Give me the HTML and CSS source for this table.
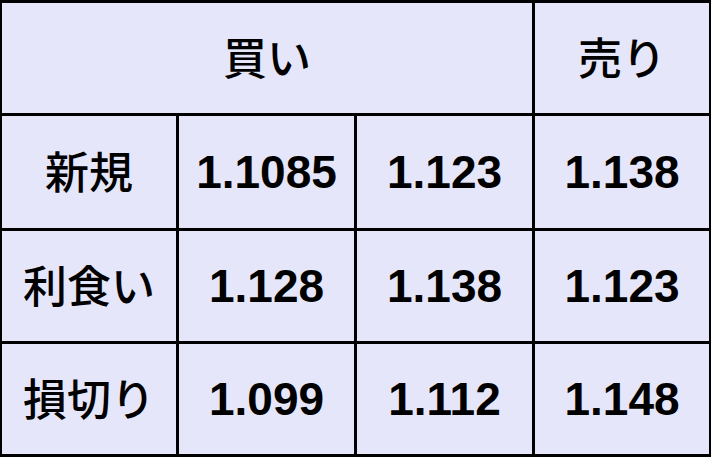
FILE: index.html
```html
<!DOCTYPE html>
<html lang="ja">
<head>
<meta charset="utf-8">
<link rel="stylesheet" href="styles.css">
</head>
<body>
<div class="table">
  <div class="cell head span3 jp">買い</div>
  <div class="cell head jp">売り</div>

  <div class="cell jp">新規</div>
  <div class="cell num">1.1085</div>
  <div class="cell num">1.123</div>
  <div class="cell num">1.138</div>

  <div class="cell jp">利食い</div>
  <div class="cell num">1.128</div>
  <div class="cell num">1.138</div>
  <div class="cell num">1.123</div>

  <div class="cell jp">損切り</div>
  <div class="cell num">1.099</div>
  <div class="cell num">1.112</div>
  <div class="cell num">1.148</div>
</div>
</body>
</html>
```

FILE: styles.css
```css
html, body {
  margin: 0;
  padding: 0;
  background: #e6e6fa;
}
.table {
  width: 711px;
  height: 457px;
  box-sizing: border-box;
  background: #000;
  padding: 3px 2px;
  display: grid;
  grid-template-columns: 174px 175px 175px 174px;
  grid-template-rows: 110px 112px 110px 110px;
  gap: 3px;
}
.cell {
  background: #e6e6fa;
  display: flex;
  align-items: center;
  justify-content: center;
  color: #000;
}
.span3 {
  grid-column: span 3;
}
.jp {
  font-family: "Noto Sans CJK JP", sans-serif;
  font-weight: 500;
  font-size: 44px;
  padding-bottom: 4px;
}
.num {
  font-family: "Liberation Sans", Arial, sans-serif;
  font-weight: bold;
  font-size: 46px;
}
```
